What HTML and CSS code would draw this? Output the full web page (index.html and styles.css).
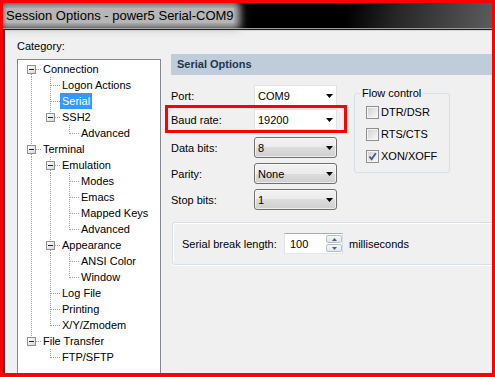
FILE: index.html
```html
<!DOCTYPE html>
<html lang="en">
<head>
    <meta charset="UTF-8">
    <title>Session Options</title>
    <link rel="stylesheet" href="styles.css">
</head>
<body>
<div class="shot">
    <div class="titlebar"><span class="title">Session Options - power5 Serial-COM9</span></div>
    <div class="body">
        <div class="side">
            <div class="cat">Category:</div>
            <div class="tree">
                <div class="row"><span class="n b dn"><i class="ex"></i></span><span class="lbl">Connection</span></div>
                <div class="row"><span class="g v"></span><span class="n t"></span><span class="lbl">Logon Actions</span></div>
                <div class="row"><span class="g v"></span><span class="n t"></span><span class="lbl sel">Serial</span></div>
                <div class="row"><span class="g v"></span><span class="n b up"><i class="ex"></i></span><span class="lbl">SSH2</span></div>
                <div class="row"><span class="g v"></span><span class="g"></span><span class="n l"></span><span class="lbl">Advanced</span></div>
                <div class="row"><span class="n b up dn"><i class="ex"></i></span><span class="lbl">Terminal</span></div>
                <div class="row"><span class="g v"></span><span class="n b up dn"><i class="ex"></i></span><span class="lbl">Emulation</span></div>
                <div class="row"><span class="g v"></span><span class="g v"></span><span class="n t"></span><span class="lbl">Modes</span></div>
                <div class="row"><span class="g v"></span><span class="g v"></span><span class="n t"></span><span class="lbl">Emacs</span></div>
                <div class="row"><span class="g v"></span><span class="g v"></span><span class="n t"></span><span class="lbl">Mapped Keys</span></div>
                <div class="row"><span class="g v"></span><span class="g v"></span><span class="n l"></span><span class="lbl">Advanced</span></div>
                <div class="row"><span class="g v"></span><span class="n b up dn"><i class="ex"></i></span><span class="lbl">Appearance</span></div>
                <div class="row"><span class="g v"></span><span class="g v"></span><span class="n t"></span><span class="lbl">ANSI Color</span></div>
                <div class="row"><span class="g v"></span><span class="g v"></span><span class="n l"></span><span class="lbl">Window</span></div>
                <div class="row"><span class="g v"></span><span class="n t"></span><span class="lbl">Log File</span></div>
                <div class="row"><span class="g v"></span><span class="n t"></span><span class="lbl">Printing</span></div>
                <div class="row"><span class="g v"></span><span class="n l"></span><span class="lbl">X/Y/Zmodem</span></div>
                <div class="row"><span class="n b up"><i class="ex"></i></span><span class="lbl">File Transfer</span></div>
                <div class="row"><span class="g"></span><span class="n l"></span><span class="lbl">FTP/SFTP</span></div>
            </div>
        </div>

        <div class="main">
            <div class="head">Serial Options</div>
            <div class="form">
                <div class="fields">
                    <div class="field">
                        <label>Port:</label>
                        <div class="combo edit">COM9 <svg class="arrow" width="7" height="4"><polygon points="0,0 7,0 3.5,4" /></svg></div>
                    </div>
                    <div class="mark">
                        <div class="field">
                            <label>Baud rate:</label>
                            <div class="combo edit">19200 <svg class="arrow" width="7" height="4"><polygon points="0,0 7,0 3.5,4" /></svg></div>
                        </div>
                    </div>
                    <div class="field">
                        <label>Data bits:</label>
                        <div class="combo btn">8 <svg class="arrow" width="7" height="4"><polygon points="0,0 7,0 3.5,4" /></svg></div>
                    </div>
                    <div class="field">
                        <label>Parity:</label>
                        <div class="combo btn">None <svg class="arrow" width="7" height="4"><polygon points="0,0 7,0 3.5,4" /></svg></div>
                    </div>
                    <div class="field">
                        <label>Stop bits:</label>
                        <div class="combo btn">1 <svg class="arrow" width="7" height="4"><polygon points="0,0 7,0 3.5,4" /></svg></div>
                    </div>
                </div>

                <fieldset class="flow">
                    <legend>Flow control</legend>
                    <div class="chk"><span class="box"></span>DTR/DSR</div>
                    <div class="chk"><span class="box"></span>RTS/CTS</div>
                    <div class="chk"><span class="box"><svg width="11" height="11"><path d="M2.5 5.5 L4.6 8.3 L8.8 2.2" fill="none" stroke="#3d5494" stroke-width="1.7" /></svg></span>XON/XOFF</div>
                </fieldset>
            </div>

            <div class="brk">
                <label class="brk-label">Serial break length:</label>
                <div class="spin">
                    <span>100</span>
                    <div class="updown">
                        <span class="ud"><svg width="5" height="3"><polygon points="2.5,0 5,3 0,3" /></svg></span>
                        <span class="ud"><svg width="5" height="3"><polygon points="0,0 5,0 2.5,3" /></svg></span>
                    </div>
                </div>
                <span class="unit">milliseconds</span>
            </div>
        </div>
    </div>
</div>
</body>
</html>
```

FILE: styles.css
```css
* {
    box-sizing: border-box;
}

body {
    margin: 0;
    font-family: "Liberation Sans", Arial, sans-serif;
    font-size: 11px;
    color: #000;
}

.shot {
    --dv: repeating-linear-gradient(#a0a0a0 0 1px, transparent 1px 2px);
    --dh: repeating-linear-gradient(90deg, #a0a0a0 0 1px, transparent 1px 2px);
    width: 495px;
    height: 377px;
    border: 3px solid #f00;
    border-bottom-width: 4px;
    overflow: hidden;
    display: flex;
    flex-direction: column;
    background: #f0f0f0;
}

/* window title */
.titlebar {
    flex: none;
    height: 26px;
    display: flex;
    align-items: center;
    padding-left: 3px;
    font-size: 13px;
    background: linear-gradient(100deg, #000 0, #000 70%, #262626 80%, #5c5c5c 100%);
    border-bottom: 1px solid #9c9c9c;
}

.title {
    line-height: 15px;
    background: #b6b6b6;
    box-shadow: 0 0 8px 6px #b6b6b6;
    white-space: nowrap;
}

.body {
    flex: 1;
    min-height: 0;
    display: flex;
    overflow: hidden;
    border-top: 1px solid #1e1e1e;
    border-left: 2px solid #3c3c3c;
    padding: 8px 0 0 12px;
    box-shadow: inset 1px 1px 0 #d4d4d4;
}

/* category tree */
.side {
    width: 144px;
    flex: none;
    display: flex;
    flex-direction: column;
}

.cat {
    line-height: 16px;
}

.tree {
    margin-top: 5px;
    height: 330px;
    flex: none;
    border: 1px solid #828790;
    background: #fff;
    padding: 1px 0 0 4px;
}

.row {
    display: flex;
    height: 16px;
}

.g, .n {
    width: 19px;
    height: 16px;
    flex: none;
}

.v {
    background: var(--dv) 9px 0 / 1px 16px no-repeat;
}

.t {
    background: var(--dv) 9px 0 / 1px 16px no-repeat, var(--dh) 10px 8px / 9px 1px no-repeat;
}

.l {
    background: var(--dv) 9px 0 / 1px 9px no-repeat, var(--dh) 10px 8px / 9px 1px no-repeat;
}

.b {
    display: flex;
    padding: 4px 0 0 5px;
    background: var(--dh) 14px 8px / 5px 1px no-repeat;
}

.b.dn {
    background: var(--dh) 14px 8px / 5px 1px no-repeat, var(--dv) 9px 13px / 1px 3px no-repeat;
}

.b.up {
    background: var(--dh) 14px 8px / 5px 1px no-repeat, var(--dv) 9px 0 / 1px 4px no-repeat;
}

.b.up.dn {
    background: var(--dh) 14px 8px / 5px 1px no-repeat, var(--dv) 9px 0 / 1px 4px no-repeat, var(--dv) 9px 13px / 1px 3px no-repeat;
}

.ex {
    width: 9px;
    height: 9px;
    border: 1px solid #919191;
    background: linear-gradient(135deg, #fff, #d8d8d8);
    display: flex;
    align-items: center;
    justify-content: center;
}

.ex::after {
    content: "";
    width: 5px;
    height: 1px;
    background: #222;
}

.lbl {
    padding: 0 2px;
    line-height: 16px;
    white-space: nowrap;
}

.sel {
    background: #3399ff;
    color: #fff;
}

/* serial options */
.main {
    flex: 1;
    min-width: 0;
    margin-left: 10px;
}

.head {
    margin-top: 16px;
    height: 21px;
    line-height: 21px;
    padding-left: 6px;
    background: #bfcddb;
    color: #1e3550;
    font-weight: bold;
}

.form {
    display: flex;
    margin-top: 10px;
}

.fields {
    width: 166px;
    flex: none;
    display: flex;
    flex-direction: column;
    gap: 5px;
}

.field {
    display: flex;
    align-items: center;
    height: 21px;
}

.field label {
    width: 83px;
    flex: none;
}

.mark {
    margin: -6px -10px -1px -6px;
    border: 3px solid #f00;
    padding: 1px 7px 0 3px;
}

.combo {
    width: 83px;
    height: 21px;
    display: flex;
    align-items: center;
    justify-content: space-between;
    padding: 0 3px 0 3px;
}

.combo.edit {
    background: #fff;
    border: 1px solid #e2e2e2;
}

.combo.btn {
    border: 1px solid #707070;
    border-radius: 3px;
    background: linear-gradient(#f2f2f2, #ebebeb 50%, #dddddd 50%, #cfcfcf);
    box-shadow: inset 0 0 0 1px rgba(255, 255, 255, 0.6);
}

.arrow {
    margin-top: 1px;
    fill: #000;
}

.flow {
    margin: 1px 0 0 17px;
    width: 96px;
    height: 87px;
    border: 1px solid #d5dfe5;
    border-radius: 3px;
    padding: 1px 0 4px 5px;
}

.flow legend {
    padding: 0 2px;
    line-height: 14px;
}

.chk {
    display: flex;
    align-items: center;
    height: 22px;
    gap: 2px;
}

.box {
    width: 13px;
    height: 13px;
    margin-left: 6px;
    border: 1px solid #8e8f8f;
    background: linear-gradient(135deg, #cfcfcf, #fbfbfb);
    box-shadow: inset 0 0 0 1px #f4f4f4;
    display: flex;
}

.box svg {
    display: block;
}

/* serial break */
.brk {
    margin: 12px -6px 0 1px;
    height: 43px;
    display: flex;
    align-items: center;
    padding-left: 9px;
    border: 1px solid #d5dfe5;
    border-radius: 3px;
    box-shadow: inset 1px 1px 0 #fff, 0 1px 0 #fff;
}

.brk-label {
    width: 102px;
    flex: none;
}

.spin {
    width: 59px;
    height: 21px;
    display: flex;
    align-items: center;
    padding-left: 5px;
    background: #fff;
    border: 1px solid #abadb3;
    border-color: #abadb3 #dbdfe6 #e3e9ef #e2e3ea;
}

.updown {
    margin-left: auto;
    height: 19px;
    width: 16px;
    display: flex;
    flex-direction: column;
    gap: 1px;
    padding: 1px 0;
}

.ud {
    flex: 1;
    display: flex;
    align-items: center;
    justify-content: center;
    border: 1px solid #b7c0cb;
    border-radius: 2px;
    background: linear-gradient(#f6f8fa, #e1e7ee);
}

.ud svg {
    fill: #4c607a;
    display: block;
}

.unit {
    margin-left: 6px;
}
```
